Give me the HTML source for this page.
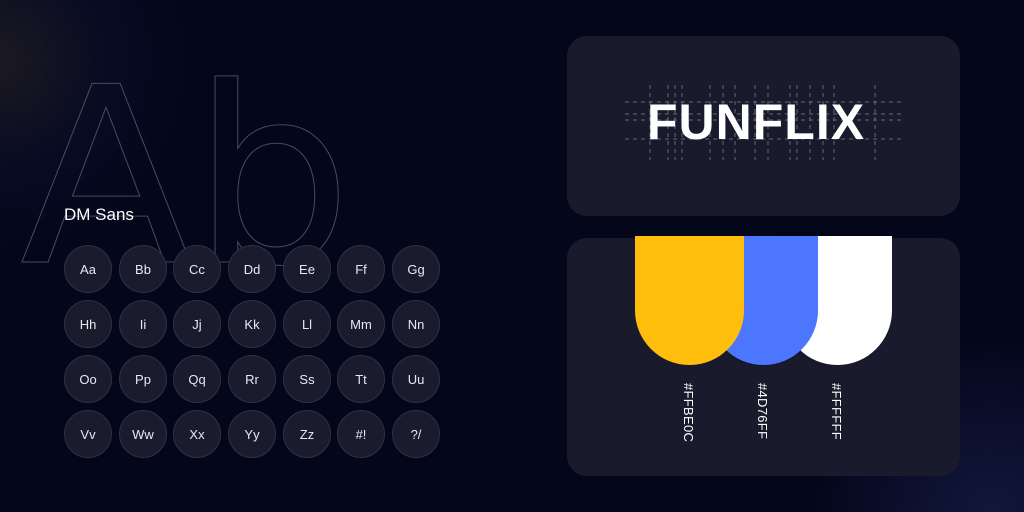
<!DOCTYPE html>
<html><head><style>
*{margin:0;padding:0;box-sizing:border-box}
body{width:1024px;height:512px;overflow:hidden;background:#04061a;font-family:"Liberation Sans",sans-serif;position:relative}
.bg{position:absolute;inset:0;background:radial-gradient(circle at 0px 60px,rgba(110,95,60,.22),rgba(40,50,110,.1) 110px,transparent 200px),radial-gradient(circle at 990px 512px,rgba(40,50,110,.4),transparent 180px)}
.panel{position:absolute;left:567px;width:393px;background:#191b2d;border-radius:20px}
.c{position:absolute;width:48px;height:48px;border-radius:50%;background:#1a1c2e;border:1px solid #2e3145;color:#e8e9ef;font-size:13px;display:flex;align-items:center;justify-content:center}
.sw{position:absolute;top:236px;height:129px;width:109px;border-radius:0 0 55px 55px}
.lab{position:absolute;top:383px;color:#fff;font-size:13px;writing-mode:vertical-rl;letter-spacing:.3px}
</style></head><body>
<div class="bg"></div>
<svg style="position:absolute;left:0;top:0" width="560" height="512">
<text x="20" y="262" font-size="245" font-family="DejaVu Sans" textLength="332" lengthAdjust="spacingAndGlyphs" fill="none" stroke="#5e6074" stroke-width="1" opacity=".75">Ab</text>
</svg>
<div style="position:absolute;left:64px;top:205px;color:#fff;font-size:17px">DM Sans</div>
<div class="panel" style="top:36px;height:180px"></div>
<div class="panel" style="top:238px;height:238px"></div>
<svg style="position:absolute;left:620px;top:85px" width="290" height="80">
<g stroke="#8a8c9c" stroke-width="1" stroke-dasharray="4 4" opacity=".7">
<line x1="5" y1="17" x2="285" y2="17"/><line x1="5" y1="29" x2="285" y2="29"/><line x1="5" y1="35" x2="285" y2="35"/><line x1="5" y1="54" x2="285" y2="54"/>
<line x1="30" y1="0" x2="30" y2="75"/><line x1="48" y1="0" x2="48" y2="75"/><line x1="55" y1="0" x2="55" y2="75"/><line x1="62" y1="0" x2="62" y2="75"/>
<line x1="90" y1="0" x2="90" y2="75"/><line x1="103" y1="0" x2="103" y2="75"/><line x1="115" y1="0" x2="115" y2="75"/><line x1="135" y1="0" x2="135" y2="75"/>
<line x1="148" y1="0" x2="148" y2="75"/><line x1="170" y1="0" x2="170" y2="75"/><line x1="177" y1="0" x2="177" y2="75"/><line x1="190" y1="0" x2="190" y2="75"/>
<line x1="203" y1="0" x2="203" y2="75"/><line x1="214" y1="0" x2="214" y2="75"/><line x1="255" y1="0" x2="255" y2="75"/>
</g></svg>
<div style="position:absolute;left:647px;top:92px;color:#fff;font-size:50px;font-weight:bold;letter-spacing:1px;line-height:60px">FUNFLIX</div>
<div class="sw" style="left:783px;background:#fff;box-shadow:-4px 0 4px rgba(0,0,0,.2)"></div>
<div class="sw" style="left:709px;background:#4d76ff;box-shadow:-4px 0 4px rgba(0,0,0,.2)"></div>
<div class="sw" style="left:635px;background:#ffbe0c"></div>
<div class="lab" style="left:681px">#FFBE0C</div>
<div class="lab" style="left:755px">#4D76FF</div>
<div class="lab" style="left:829px">#FFFFFF</div>
<div class="c" style="left:64px;top:245px">Aa</div><div class="c" style="left:119px;top:245px">Bb</div><div class="c" style="left:173px;top:245px">Cc</div><div class="c" style="left:228px;top:245px">Dd</div><div class="c" style="left:283px;top:245px">Ee</div><div class="c" style="left:337px;top:245px">Ff</div><div class="c" style="left:392px;top:245px">Gg</div>
<div class="c" style="left:64px;top:300px">Hh</div><div class="c" style="left:119px;top:300px">Ii</div><div class="c" style="left:173px;top:300px">Jj</div><div class="c" style="left:228px;top:300px">Kk</div><div class="c" style="left:283px;top:300px">Ll</div><div class="c" style="left:337px;top:300px">Mm</div><div class="c" style="left:392px;top:300px">Nn</div>
<div class="c" style="left:64px;top:355px">Oo</div><div class="c" style="left:119px;top:355px">Pp</div><div class="c" style="left:173px;top:355px">Qq</div><div class="c" style="left:228px;top:355px">Rr</div><div class="c" style="left:283px;top:355px">Ss</div><div class="c" style="left:337px;top:355px">Tt</div><div class="c" style="left:392px;top:355px">Uu</div>
<div class="c" style="left:64px;top:410px">Vv</div><div class="c" style="left:119px;top:410px">Ww</div><div class="c" style="left:173px;top:410px">Xx</div><div class="c" style="left:228px;top:410px">Yy</div><div class="c" style="left:283px;top:410px">Zz</div><div class="c" style="left:337px;top:410px">#!</div><div class="c" style="left:392px;top:410px">?/</div>
</body></html>
